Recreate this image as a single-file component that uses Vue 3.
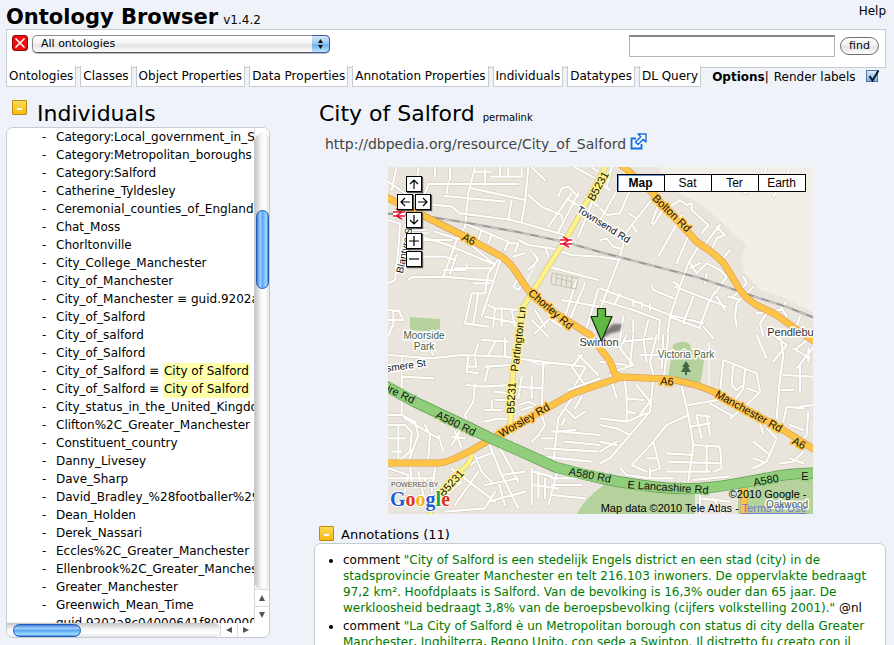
<script setup>
import { ref } from 'vue'

const ontology = ref('All ontologies')
const query = ref('')
const renderLabels = ref(true)

const tabs = [
  'Ontologies', 'Classes', 'Object Properties', 'Data Properties',
  'Annotation Properties', 'Individuals', 'Datatypes', 'DL Query'
]

const individuals = [
  { name: 'Category:Local_government_in_Salford' },
  { name: 'Category:Metropolitan_boroughs' },
  { name: 'Category:Salford' },
  { name: 'Catherine_Tyldesley' },
  { name: 'Ceremonial_counties_of_England' },
  { name: 'Chat_Moss' },
  { name: 'Chorltonville' },
  { name: 'City_College_Manchester' },
  { name: 'City_of_Manchester' },
  { name: 'City_of_Manchester', same: 'guid.9202a8c04000641f' },
  { name: 'City_of_Salford' },
  { name: 'City_of_salford' },
  { name: 'City_of_Salford' },
  { name: 'City_of_Salford', same: 'City of Salford', current: true },
  { name: 'City_of_Salford', same: 'City of Salford', current: true },
  { name: 'City_status_in_the_United_Kingdom' },
  { name: 'Clifton%2C_Greater_Manchester' },
  { name: 'Constituent_country' },
  { name: 'Danny_Livesey' },
  { name: 'Dave_Sharp' },
  { name: 'David_Bradley_%28footballer%29' },
  { name: 'Dean_Holden' },
  { name: 'Derek_Nassari' },
  { name: 'Eccles%2C_Greater_Manchester' },
  { name: 'Ellenbrook%2C_Greater_Manchester' },
  { name: 'Greater_Manchester' },
  { name: 'Greenwich_Mean_Time' },
  { name: 'guid.9202a8c04000641f80000000' }
]

const comments = [
  {
    text: '"City of Salford is een stedelijk Engels district en een stad (city) in de\nstadsprovincie Greater Manchester en telt 216.103 inwoners. De oppervlakte bedraagt\n97,2 km². Hoofdplaats is Salford. Van de bevolking is 16,3% ouder dan 65 jaar. De\nwerkloosheid bedraagt 3,8% van de beroepsbevolking (cijfers volkstelling 2001)."',
    lang: '@nl'
  },
  {
    text: '"La City of Salford è un Metropolitan borough con status di city della Greater\nManchester, Inghilterra, Regno Unito, con sede a Swinton. Il distretto fu creato con il',
    lang: ''
  }
]

// Side streets, one sheet per map quarter, drawn at three units per pixel.
const streets = [
  {
    x: 385, y: 160,
    d: 'M270 22L250 100 245 150 240 200 215 240 175 350M100 25L95 70M10 65L60 100 110 105M35 22L20 90M150 22V50M195 22V60M190 65L185 100M130 72H400M130 72L120 100M268 35H320M300 28V75M345 22V50M370 22V50M318 50H410V22M110 130L200 140 225 160 380 180 540 225M180 108L360 125M260 85L420 120M380 120L370 180M430 22L420 130 410 185M430 105L470 140 530 165V180M520 110L530 85 550 80 580 110M545 115L600 150M560 100L490 200M600 110L640 140M620 130L580 230M580 100L520 215M240 190L370 245 360 270M290 210L280 240M320 225L310 250M150 215L210 235 240 240 330 315M110 230L190 255 320 310M70 240H200M60 290H180L210 300M215 285L195 340M175 330H240M210 325H320M245 310V325M70 360L80 352 175 350 320 362M345 290L310 340 300 400H260M350 290L290 470M265 370H315M260 400L240 490 310 500M280 400L265 490M45 190L40 270 30 360 10 370M10 180L40 190M60 210H120M60 220H130M400 240L430 255 500 265 560 285 640 290M370 250H400L390 275M385 290L420 280M385 380L400 355 415 370 400 390ZM490 320L640 360M600 370L550 490M640 385L600 520M530 420L640 440M575 360L540 470M310 435L330 445 410 450M330 445L325 500M350 445V500M380 450L390 500M300 470L400 490M10 450L45 455M25 450V500M40 450L55 480M10 480H50M20 500L10 530M470 430L500 480 530 500M450 450L480 500M500 470L450 520M440 480L490 530M445 280L460 300 430 330M480 260L490 290M570 22L640 60M620 22L640 35M480 60L440 22'
  },
  {
    x: 600, y: 160,
    d: 'M0 70L30 90M0 180L70 60M35 22L20 80M90 90L60 160 20 165 0 145M170 100L80 215 60 290 0 450M105 40L150 60M60 22L90 60M185 105L155 190M200 130L160 195M245 165L175 290M270 215L230 310M210 140L240 120 260 135 275 130V150L325 195 305 220M360 195L305 265M350 200L375 225 350 235 330 280M390 270L365 300M295 260L265 310 240 380 210 470 200 540M270 310L290 340 320 310 360 330 380 350M270 325L300 310M320 340L315 370M0 385L120 430 210 465 310 490M0 420L100 450 180 480 175 540M45 430L60 400M100 440V420M125 445V425M150 450V430M225 380L380 440M345 395L325 430 300 500M380 350L345 400M280 410L250 490M155 375L160 390 220 415M350 410L375 450M240 380L220 365M210 470L300 505M430 350L440 370 400 410M460 380L410 430 405 470 410 500M420 420L385 410M560 425L540 450 470 460M545 445L560 470M600 470L590 500M500 460L480 490 490 530M0 240L20 235 40 260 60 265M100 200L110 215M85 160L110 175M0 290L60 300M70 470L60 540M145 480L130 540M100 480V540M310 500L340 535M500 22L490 50M570 22L560 45M420 90L440 100M520 110L530 95'
  },
  {
    x: 385, y: 335,
    d: 'M50 70V240M10 60L140 70 230 60 360 65 470 80 600 95M10 110L50 95M50 125L145 130M120 22L145 60M280 25L270 60M250 65L245 110 280 115M270 70L275 95H245M330 20L310 60M360 10V65M290 15L370 20M300 95L380 90M310 95L300 140M245 150L290 155 380 150M270 150L265 200 240 240 250 275M300 225H350M320 195V225M330 170L370 175M330 195H365M410 125L400 190M440 125V190M390 155L470 160M475 80L470 240M400 210L430 200 450 210M410 225L440 215M560 95L600 150M600 100L570 150M565 90L590 60M580 60L640 120M550 165L645 130M560 190L520 250 505 380M540 220L570 250 600 230M590 185L570 220M570 285L500 290M540 320L645 330M530 270L540 250M470 310H505M480 340L645 350M475 365L620 380M530 290L645 300M440 320L460 300 480 270 470 240M10 240H50L90 260 100 300 70 380M10 270H60L80 290 75 350 40 380M10 310H60M40 275V380M20 350H50M120 270L135 300 130 370M160 300L175 350M60 250L160 310M230 280L200 330M230 340L210 290M240 310L200 305M300 260L340 250 380 255M265 350L290 410 320 440M310 320L350 420 400 520M330 310L400 440M345 340L390 320M280 370L320 355M350 420L420 410M200 400L330 500M190 440L270 380M230 440L160 500M280 410L210 510M330 470L300 520 180 530M310 500L420 470M360 510L340 440M300 450L400 430M440 400V510M440 450L520 460M480 430V490M460 410V490M520 400L490 510M500 430H600M500 450H590M500 480L600 490M445 410L500 425M10 400L70 420 60 470M10 430H150M100 410L120 500M150 400L140 470M10 500L60 510M75 390L80 440M120 430V460'
  },
  {
    x: 600, y: 335,
    d: 'M170 0L150 80 160 120M100 0L90 90M80 0L60 40 100 90 40 110M190 0L185 100M130 10L140 80M70 20L160 10M205 0L190 150M120 60H180M0 80L80 90M160 130L150 230 90 300 30 370M75 140L80 190V260M80 190L130 195M80 230L105 235M30 120L50 190M20 150L40 145M0 270L50 280 90 300M0 320L50 330M0 250L80 260 140 235M0 350L50 320M0 385L30 370M110 150L150 200 120 240M245 155L265 240 280 330 265 440M265 240L200 270 160 320 95 390M160 320L180 400 150 410M60 400L80 420 150 430 220 430M95 390L140 410M140 370H170M150 400V430M200 355L280 360M205 380L360 385M200 410H330M280 330L360 335 365 400 340 410M320 335V410M280 435L385 425M290 240L330 245M270 275L330 265M290 245L305 310M320 240L330 300M370 75L470 115 480 170 440 210 390 250M370 75L360 170M400 90L395 150 410 165 430 150M435 105L430 160 390 215M440 160L470 170M330 205L400 245M265 210L380 190M470 0L500 70M540 0L550 60 540 130 530 250M520 0L560 30M560 30L520 80M580 40L630 70M590 40L640 0M645 30L590 100M625 40V80M550 120L645 125M600 90V170M545 165H580M610 220L560 215 550 260M625 230L620 300 600 320M645 210L600 215M570 270L610 285M500 280L530 310 500 380 460 400M480 265L490 295M460 320L510 360M460 370L490 380M540 385L580 380 610 350M570 370L610 385M300 460V537M300 490L390 500M340 490L370 537M330 520L400 525'
  }
]

const trunk = 'M380 383L415 402 468 427 488 437 522 452 555 467C585 475 620 484 667 488 C705 491 735 484 767 478Q790 473 820 473'
const aRoads = [
  'M380 194L418 213 468 238 495 253Q506 258 514 269L528 290Q538 301 552 311L590 335 602 351Q611 361 613 369Q614 376 622 377L667 379Q700 384 720 395L753 413 780 428 820 453',
  'M380 463H437Q446 464 472 450L500 434 542 411 572 394Q588 388 622 377',
  'M620 164L647 187 683 227 697 242Q717 255 725 265L740 290Q748 301 760 307L775 314 800 332 820 345',
  'M744 488V514'
]
const bRoads = [
  'M607 164L600 177 573 227 562 245 548 267 535 288 523 307 519 335 513 372 510 428',
  'M472 450Q472 460 466 466L450 480 432 505 429 518'
]
const railway = 'M380 213L425 216 468 223 518 232 565 242 600 252 650 265 700 278 750 295 787 307 820 320'

const roadLabels = [
  { t: 'A6', x: 469, y: 239, a: 27, k: 'a' },
  { t: 'Chorley Rd', x: 551, y: 309, a: 41, k: 'a' },
  { t: 'Worsley Rd', x: 524, y: 420, a: -30, k: 'a' },
  { t: 'Bolton Rd', x: 672, y: 213, a: 44, k: 'a' },
  { t: 'A6', x: 667, y: 381, a: 5, k: 'a' },
  { t: 'Manchester Rd', x: 749, y: 411, a: 29, k: 'a' },
  { t: 'A6', x: 799, y: 443, a: 28, k: 'a' },
  { t: 'B5231', x: 598, y: 186, a: -61, k: 'b' },
  { t: 'Partington Ln', x: 518, y: 339, a: -83, k: 'b' },
  { t: 'B5231', x: 511, y: 398, a: -87, k: 'b' },
  { t: 'B5231', x: 451, y: 483, a: -48, k: 'b' },
  { t: 'ire Rd', x: 401, y: 394, a: 26, k: 'g' },
  { t: 'A580 Rd', x: 456, y: 423, a: 26, k: 'g' },
  { t: 'A580 Rd', x: 590, y: 475, a: 11, k: 'g' },
  { t: 'E Lancashire Rd', x: 668, y: 487, a: 4, k: 'g' },
  { t: 'A580', x: 766, y: 480, a: -10, k: 'g' },
  { t: 'E', x: 805, y: 476, a: 0, k: 'g' },
  { t: 'Townsend Rd', x: 604, y: 224, a: 32, k: 's' },
  { t: 'Blantyre St', x: 404, y: 249, a: -78, k: 's' },
  { t: 'smere St', x: 406, y: 365, a: -8, k: 's' },
  { t: 'Moorside', x: 424, y: 335, a: 0, k: 'p' },
  { t: 'Park', x: 424, y: 346, a: 0, k: 'p' },
  { t: 'Victoria Park', x: 686, y: 354, a: 0, k: 'p' },
  { t: 'Swinton', x: 599, y: 342, a: 0, k: 't' },
  { t: 'Pendlebury', x: 795, y: 332, a: 0, k: 't' },
  { t: 'Oakwood', x: 787, y: 504, a: 0, k: 'p' }
]

const mapTypes = ['Map', 'Sat', 'Ter', 'Earth']
const mapType = ref('Map')

const navButtons = [
  { k: 'up', label: 'Pan up', d: 'M7 12V3M3 7L7 3 11 7' },
  { k: 'left', label: 'Pan left', d: 'M12 7H3M7 3L3 7 7 11' },
  { k: 'right', label: 'Pan right', d: 'M2 7H11M7 3L11 7 7 11' },
  { k: 'down', label: 'Pan down', d: 'M7 2V11M3 7L7 11 11 7' },
  { k: 'in', label: 'Zoom in', d: 'M7 2V12M2 7H12' },
  { k: 'out', label: 'Zoom out', d: 'M2 7H12' }
]
</script>

<template>
  <div class="page">
    <header class="masthead">
      <h1>Ontology Browser</h1>
      <span class="version">v1.4.2</span>
      <a class="help" href="#help">Help</a>
    </header>

    <div class="toolbar">
      <button class="clear" type="button" aria-label="Remove ontology">
        <svg viewBox="0 0 16 16" width="16" height="16">
          <rect x=".5" y=".5" width="15" height="15" rx="2.5" fill="#f00d0d" stroke="#8c0a0a" />
          <path d="M4 4L12 12M12 4L4 12" stroke="#fff" stroke-width="1.7" stroke-linecap="round" />
        </svg>
      </button>
      <div class="picker">
        <select v-model="ontology" aria-label="Ontology">
          <option>All ontologies</option>
        </select>
        <span class="picker-cap">
          <svg viewBox="0 0 17 16" width="17" height="16">
            <path d="M8.500 3L11 7H6ZM8.500 13L11 9H6Z" fill="#111" />
          </svg>
        </span>
      </div>
      <form class="search" @submit.prevent>
        <input v-model="query" type="text" aria-label="Find entity">
        <button type="submit">find</button>
      </form>
    </div>

    <div class="tabrow">
      <nav class="tabs">
        <a v-for="tab in tabs" :key="tab" href="#">{{ tab }}</a>
      </nav>
      <div class="options">
        <b>Options</b><span>|</span>
        <label for="render-labels">Render labels</label>
        <span class="tick">
          <input id="render-labels" v-model="renderLabels" type="checkbox">
          <svg v-if="renderLabels" viewBox="0 0 14 15" width="14" height="15">
            <path d="M3.500 7L6.500 11.500 12.500 1.500" fill="none" stroke="#10151d" stroke-width="2" />
          </svg>
        </span>
      </div>
    </div>

    <main class="columns">
      <section class="sidebar">
        <div class="side-head">
          <button class="fold" type="button" aria-label="Collapse individuals"></button>
          <h2>Individuals</h2>
        </div>
        <div class="panel browser">
          <ul class="tree">
            <li v-for="(item, i) in individuals" :key="i">
              <span class="dash">-</span>
              <a href="#">{{ item.name }}</a>
              <template v-if="item.same"> ≡ <a href="#" :class="{ current: item.current }">{{ item.same }}</a></template>
            </li>
          </ul>
          <div class="vbar">
            <div class="track"><div class="thumb"></div></div>
            <span class="arrow up"></span>
            <span class="arrow down"></span>
          </div>
          <div class="hbar">
            <div class="track"><div class="thumb"></div></div>
            <span class="arrow left"></span>
            <span class="arrow right"></span>
          </div>
        </div>
      </section>

      <section class="detail">
        <div class="detail-head">
          <h2>City of Salford</h2>
          <a href="#permalink">permalink</a>
        </div>
        <p class="uri">
          <span>http://dbpedia.org/resource/City_of_Salford</span>
          <a href="http://dbpedia.org/resource/City_of_Salford" aria-label="Open resource">
            <svg viewBox="0 0 17 17" width="17" height="17">
              <path d="M6 5.500H1.500V15.500H11.500V11" fill="none" stroke="#0f6fe6" stroke-width="1.800" />
              <path d="M8 1H16V9L13.200 6.200 8 11.500 5.500 9 10.800 3.800Z" fill="#fff" stroke="#0f6fe6" stroke-width="1.400" stroke-linejoin="round" />
            </svg>
          </a>
        </p>

        <div class="map">
          <svg class="canvas" viewBox="388 167 425 347" width="425" height="347">
            <rect x="388" y="167" width="425" height="347" fill="#e9e5dc" />
            <path d="M658 167L672 190 700 203 723 223 735 235 747 245 741 258 745 273 760 290 780 296 813 312V167Z" fill="#f2efe9" />
            <path d="M410 317L440 319V332L410 330ZM673 345Q682 339 690 344L691 350 703 352 704 362 700 385 668 378Z" fill="#b5d29c" />
            <path d="M577 514Q583 500 605 484L695 490V514ZM738 487L813 477V514H738Z" fill="#b5d29c" />

            <g v-for="(sheet, i) in streets" :key="i" :transform="`translate(${sheet.x} ${sheet.y}) scale(.3333)`" fill="none" stroke-linejoin="round" stroke-linecap="round">
              <path :d="sheet.d" stroke="#cfc7b7" stroke-width="9.500" />
              <path :d="sheet.d" stroke="#fff" stroke-width="6.500" />
            </g>

            <g fill="none" stroke="#c9c0ae">
              <path d="M552 273L578 278 576 289 551 284ZM556 278L573 282M557 274L556 284M562 275L561 286M567 276L566 287M572 277L571 288" />
              <path d="M530 250L538 258 525 285M709 343V388M527 360L545 366" stroke="#fff" />
            </g>

            <path :d="railway" fill="none" stroke="#999" stroke-width="2.200" />
            <path :d="railway" fill="none" stroke="#d0d0d0" stroke-width="1.200" stroke-dasharray="8 8" />

            <g fill="none" stroke-linejoin="round">
              <path v-for="d in bRoads" :key="d" :d="d" stroke="#cfc27a" stroke-width="5.600" />
              <path v-for="d in bRoads" :key="'f' + d" :d="d" stroke="#fdf287" stroke-width="4.400" />
              <path v-for="d in aRoads" :key="d" :d="d" stroke="#d29a56" stroke-width="7" />
              <path v-for="d in aRoads" :key="'f' + d" :d="d" stroke="#ffc345" stroke-width="5.800" />
              <path :d="trunk" stroke="#5d9a50" stroke-width="11" />
              <path :d="trunk" stroke="#91ce7b" stroke-width="9.600" />
            </g>

            <g fill="none" stroke="#fff" stroke-width="4.500">
              <path d="M393 212H405M393 216H405M560 240H572M560 244H572" />
            </g>
            <g fill="none" stroke="#e8112d" stroke-width="1.400">
              <path d="M393 212H405M393 216H405M396 209L402 212 396 216 402 219M560 240H572M560 244H572M563 237L569 240 563 244 569 247" />
            </g>

            <path d="M686 361L690 367H688L691 372H687V375H685V372H681L684 367H682Z" fill="#3f6b46" />

            <text v-for="(l, i) in roadLabels" :key="i" :class="['lbl', l.k]" :transform="`translate(${l.x} ${l.y}) rotate(${l.a})`" text-anchor="middle" dy="4">{{ l.t }}</text>

            <path class="pin-shadow" d="M601 340L605 331 613 324 622 324 620 331 609 334Z" fill="#333" opacity=".6" />
            <path d="M597.500 308.500H605.500V316.500H612L601.500 341 591 316.500H597.500Z" fill="#5fb944" stroke="#132b0d" stroke-width="1.200" stroke-linejoin="round" />

            <text x="391" y="487" class="powered">POWERED BY</text>
            <text x="390" y="506" class="google"><tspan fill="#1d5bd8">G</tspan><tspan fill="#e0301e">o</tspan><tspan fill="#f2b50f">o</tspan><tspan fill="#1d5bd8">g</tspan><tspan fill="#1fa13a">l</tspan><tspan fill="#e0301e">e</tspan></text>
          </svg>

          <button v-for="b in navButtons" :key="b.k" type="button" :class="['nav', b.k]" :aria-label="b.label">
            <svg viewBox="0 0 14 14" width="14" height="14"><path :d="b.d" fill="none" stroke="#000" stroke-width="1.200" /></svg>
          </button>

          <div class="types">
            <button v-for="t in mapTypes" :key="t" type="button" :class="{ on: t === mapType }" @click="mapType = t">{{ t }}</button>
          </div>

          <p class="credit">©2010 Google -<br>Map data ©2010 Tele Atlas - <a href="#terms">Terms of Use</a></p>
        </div>

        <div class="notes-head">
          <button class="fold" type="button" aria-label="Collapse annotations"></button>
          <h3>Annotations (11)</h3>
        </div>
        <div class="panel notes">
          <ul>
            <li v-for="(c, i) in comments" :key="i">comment <q>{{ c.text }}</q> {{ c.lang }}</li>
          </ul>
        </div>
      </section>
    </main>
  </div>
</template>

<style>
html,
body {
  overflow: hidden;
  background: #eff3f9;
}
</style>

<style scoped>
.page {
  display: flex;
  flex-direction: column;
  box-sizing: border-box;
  height: 100vh;
  padding: 0 8px 0 6px;
  overflow: hidden;
  background: #eff3f9;
  color: #000;
  font: 12px/16px Verdana, "DejaVu Sans", sans-serif;
}
h1, h2, h3, p, ul { margin: 0; padding: 0; font-weight: normal; }
ul { list-style: none; }
a { color: inherit; text-decoration: none; }
button { padding: 0; border: 0; background: none; font-family: inherit; color: inherit; }

.masthead { display: flex; align-items: baseline; gap: 5px; height: 29px; flex: none; }
.masthead h1 { font-size: 21px; line-height: 34px; font-weight: bold; }
.version { font-size: 12px; }
.help { margin-left: auto; align-self: flex-start; padding-top: 3px; }

.toolbar {
  display: flex;
  flex: none;
  align-items: flex-start;
  gap: 4px;
  box-sizing: border-box;
  height: 39px;
  padding: 5px 5px 0;
  border: 1px solid #c5cbd3;
  background: #fff;
}
.clear { width: 16px; height: 16px; }
.clear svg { display: block; }
.picker { display: grid; width: 298px; height: 18px; }
.picker select {
  grid-area: 1 / 1;
  appearance: none;
  width: 100%;
  padding: 0 24px 0 8px;
  border: 1px solid #8c8c8c;
  border-bottom-color: #555;
  border-radius: 5px;
  background: linear-gradient(#fff, #f4f4f4 45%, #e4e4e4 55%, #fbfbfb);
  box-shadow: 0 1px 1px #bbb;
  color: #000;
  font: 11px/16px "DejaVu Sans", sans-serif;
}
.picker-cap {
  grid-area: 1 / 1;
  justify-self: end;
  box-sizing: border-box;
  width: 18px;
  border: 1px solid #3e5b94;
  border-left: 0;
  border-radius: 0 5px 5px 0;
  background: linear-gradient(#d3e6fa, #9cc8f3 45%, #6fb0ee 55%, #b9e3ff);
  pointer-events: none;
}
.picker-cap svg { display: block; }
.search { display: flex; align-items: flex-start; gap: 5px; margin-left: auto; }
.search input {
  box-sizing: border-box;
  width: 206px;
  height: 22px;
  border: 1px solid #b5b5b5;
  border-top: 2px solid #858585;
  background: #fff;
}
.search button {
  box-sizing: border-box;
  width: 39px;
  height: 18px;
  margin: 2px 1px 0 0;
  border: 1px solid #6f6f6f;
  border-radius: 9px;
  background: linear-gradient(#fff, #f0f0f0 48%, #e2e2e2 52%, #fdfdfd);
  font-size: 11px;
  line-height: 14px;
}

.tabrow { display: flex; flex: none; align-items: flex-start; margin-top: -2px; }
.tabs { display: flex; gap: 4px; }
.tabs a {
  padding: 2px 2px 1px;
  border: solid #c5cbd3;
  border-width: 0 1px 1px;
  background: #fff;
  line-height: 17px;
  white-space: nowrap;
}
.options { display: flex; padding: 3px 0 0 11px; white-space: nowrap; }
.options label { padding-left: 5px; }
.tick { display: grid; margin-left: 10px; }
.tick input {
  grid-area: 1 / 1;
  appearance: none;
  box-sizing: border-box;
  width: 12px;
  height: 12px;
  margin: 1px 0 0;
  border: 1px solid #5776a6;
  background: linear-gradient(#d8eafc, #6fb1f0);
}
.tick svg { grid-area: 1 / 1; pointer-events: none; }

.columns { display: flex; flex: 1; gap: 44px; min-height: 0; }
.sidebar { display: flex; flex: none; flex-direction: column; width: 264px; padding-bottom: 7px; }
.side-head { display: flex; align-items: flex-start; gap: 10px; height: 40px; padding: 0 0 0 6px; box-sizing: border-box; flex: none; }
.side-head h2, .detail-head h2 { font-size: 22px; line-height: 26px; }
.side-head .fold { margin-top: 13px; }
.side-head h2 { padding-top: 14px; }
.fold {
  display: grid;
  place-items: center;
  box-sizing: border-box;
  flex: none;
  width: 15px;
  height: 15px;
  border: 1px solid #c08a10;
  border-radius: 1px;
  background: linear-gradient(#f9dc55, #f8b70c);
}
.fold::after { content: ""; width: 5px; height: 2px; margin-top: 3px; background: #fff; }

.panel { border: 1px solid #c5cbd3; border-radius: 7px; background: #fff; }
.browser {
  display: grid;
  flex: 1;
  grid-template: minmax(0, 1fr) 14px / minmax(0, 1fr) 15px;
  min-height: 0;
  overflow: hidden;
}
.tree { min-height: 0; overflow: hidden; white-space: nowrap; }
.tree li { height: 18px; padding-left: 35px; line-height: 18px; }
.dash { display: inline-block; width: 14px; }
.tree .current { padding: 1px 1px 2px; background: #ffa; }

.vbar, .hbar { display: flex; background: #fff; }
.vbar { flex-direction: column; border-left: 1px solid #d5d5d5; }
.track { display: flex; flex: 1; }
.vbar .track {
  justify-content: center;
  margin-top: 6px;
  padding-top: 76px;
  border-radius: 8px;
  background: linear-gradient(90deg, #c4c4c4, #f2f2f2 40%, #fff 70%, #e6e6e6);
  box-shadow: 0 0 1px #888;
}
.vbar .thumb {
  box-sizing: border-box;
  width: 13px;
  height: 79px;
  border: 1px solid #2457b8;
  border-radius: 7px;
  background: linear-gradient(90deg, #3c83dc, #a5cffa 30%, #5ba9f2 50%, #9bdcff 85%, #3f86d8);
}
.hbar .track {
  align-items: center;
  padding-left: 6px;
  border-radius: 0 8px 8px 0;
  background: linear-gradient(#c4c4c4, #f2f2f2 40%, #fff 70%, #e6e6e6);
  box-shadow: 0 0 1px #888;
}
.hbar .thumb {
  box-sizing: border-box;
  width: 68px;
  height: 13px;
  border: 1px solid #2457b8;
  border-radius: 7px;
  background: linear-gradient(#3c83dc, #a5cffa 30%, #5ba9f2 50%, #9bdcff 85%, #3f86d8);
}
.arrow { display: grid; place-items: center; }
.vbar .arrow { height: 16px; border-top: 1px solid #ddd; }
.hbar .arrow { width: 16px; border-left: 1px solid #ddd; }
.arrow::after { content: ""; width: 6px; height: 6px; background: #555; }
.arrow.up::after { clip-path: polygon(50% 0, 100% 100%, 0 100%); }
.arrow.down::after { clip-path: polygon(0 0, 100% 0, 50% 100%); }
.arrow.left::after { clip-path: polygon(0 50%, 100% 0, 100% 100%); }
.arrow.right::after { clip-path: polygon(0 0, 100% 50%, 0 100%); }

.detail { display: flex; flex: 1; flex-direction: column; min-width: 0; overflow: hidden; }
.detail-head { display: flex; align-items: baseline; gap: 8px; padding: 14px 0 0 5px; }
.detail-head a { font-size: 10px; }
.uri { display: flex; gap: 4px; padding: 5px 0 0 11px; color: #444; font-size: 14px; line-height: 24px; }
.uri svg { display: block; margin-top: 1px; }

.map { position: relative; flex: none; margin: 11px auto 0; font-family: "Liberation Sans", Arial, sans-serif; }
.canvas { display: block; }
.lbl { font-size: 11px; paint-order: stroke; stroke-width: 3px; stroke-linejoin: round; fill: #111; }
.lbl.a { stroke: #ffc345; }
.lbl.b { stroke: #fdf287; }
.lbl.g { stroke: #91ce7b; }
.lbl.s { stroke: #fff; font-size: 10px; }
.lbl.p { stroke: #fff; fill: #3f5f49; font-size: 10px; }
.lbl.t { stroke: #fff; fill: #333; }
.pin-shadow { filter: blur(1px); }
.powered { font-size: 7px; fill: #555; paint-order: stroke; stroke: #f4f1ea; stroke-width: 2px; }
.google { font: bold 20px "Liberation Serif", serif; paint-order: stroke; stroke: #fff; stroke-width: 2px; }

.nav {
  position: absolute;
  box-sizing: border-box;
  width: 16px;
  height: 16px;
  border: 1px solid #000;
  background: #fff;
  box-shadow: 1px 1px 1px #555;
}
.nav svg { display: block; }
.nav.up { left: 18px; top: 9px; }
.nav.left { left: 9px; top: 27px; }
.nav.right { left: 27px; top: 27px; }
.nav.down { left: 18px; top: 45px; }
.nav.in { left: 18px; top: 66px; }
.nav.out { left: 18px; top: 84px; }

.types {
  position: absolute;
  top: 7px;
  right: 7px;
  display: flex;
  border: solid #000;
  border-width: 1px 0 1px 1px;
}
.types button { width: 47px; height: 16px; border-right: 1px solid #000; background: #fff; font-size: 12px; line-height: 16px; }
.types .on { font-weight: bold; box-shadow: inset 1px 1px #6d97d8; }
.credit { position: absolute; right: 6px; bottom: -1px; font-size: 11px; line-height: 14px; text-align: right; }
.credit a { color: #7777cc; text-decoration: underline; }

.notes-head { display: flex; gap: 7px; padding: 12px 0 0 5px; }
.notes-head h3 { font-size: 13px; line-height: 17px; }
.notes { flex: none; padding: 8px 12px 0 28px; }
.notes li { list-style: disc; padding-bottom: 2px; white-space: pre-line; }
.notes q { color: #007a00; quotes: none; }
</style>
